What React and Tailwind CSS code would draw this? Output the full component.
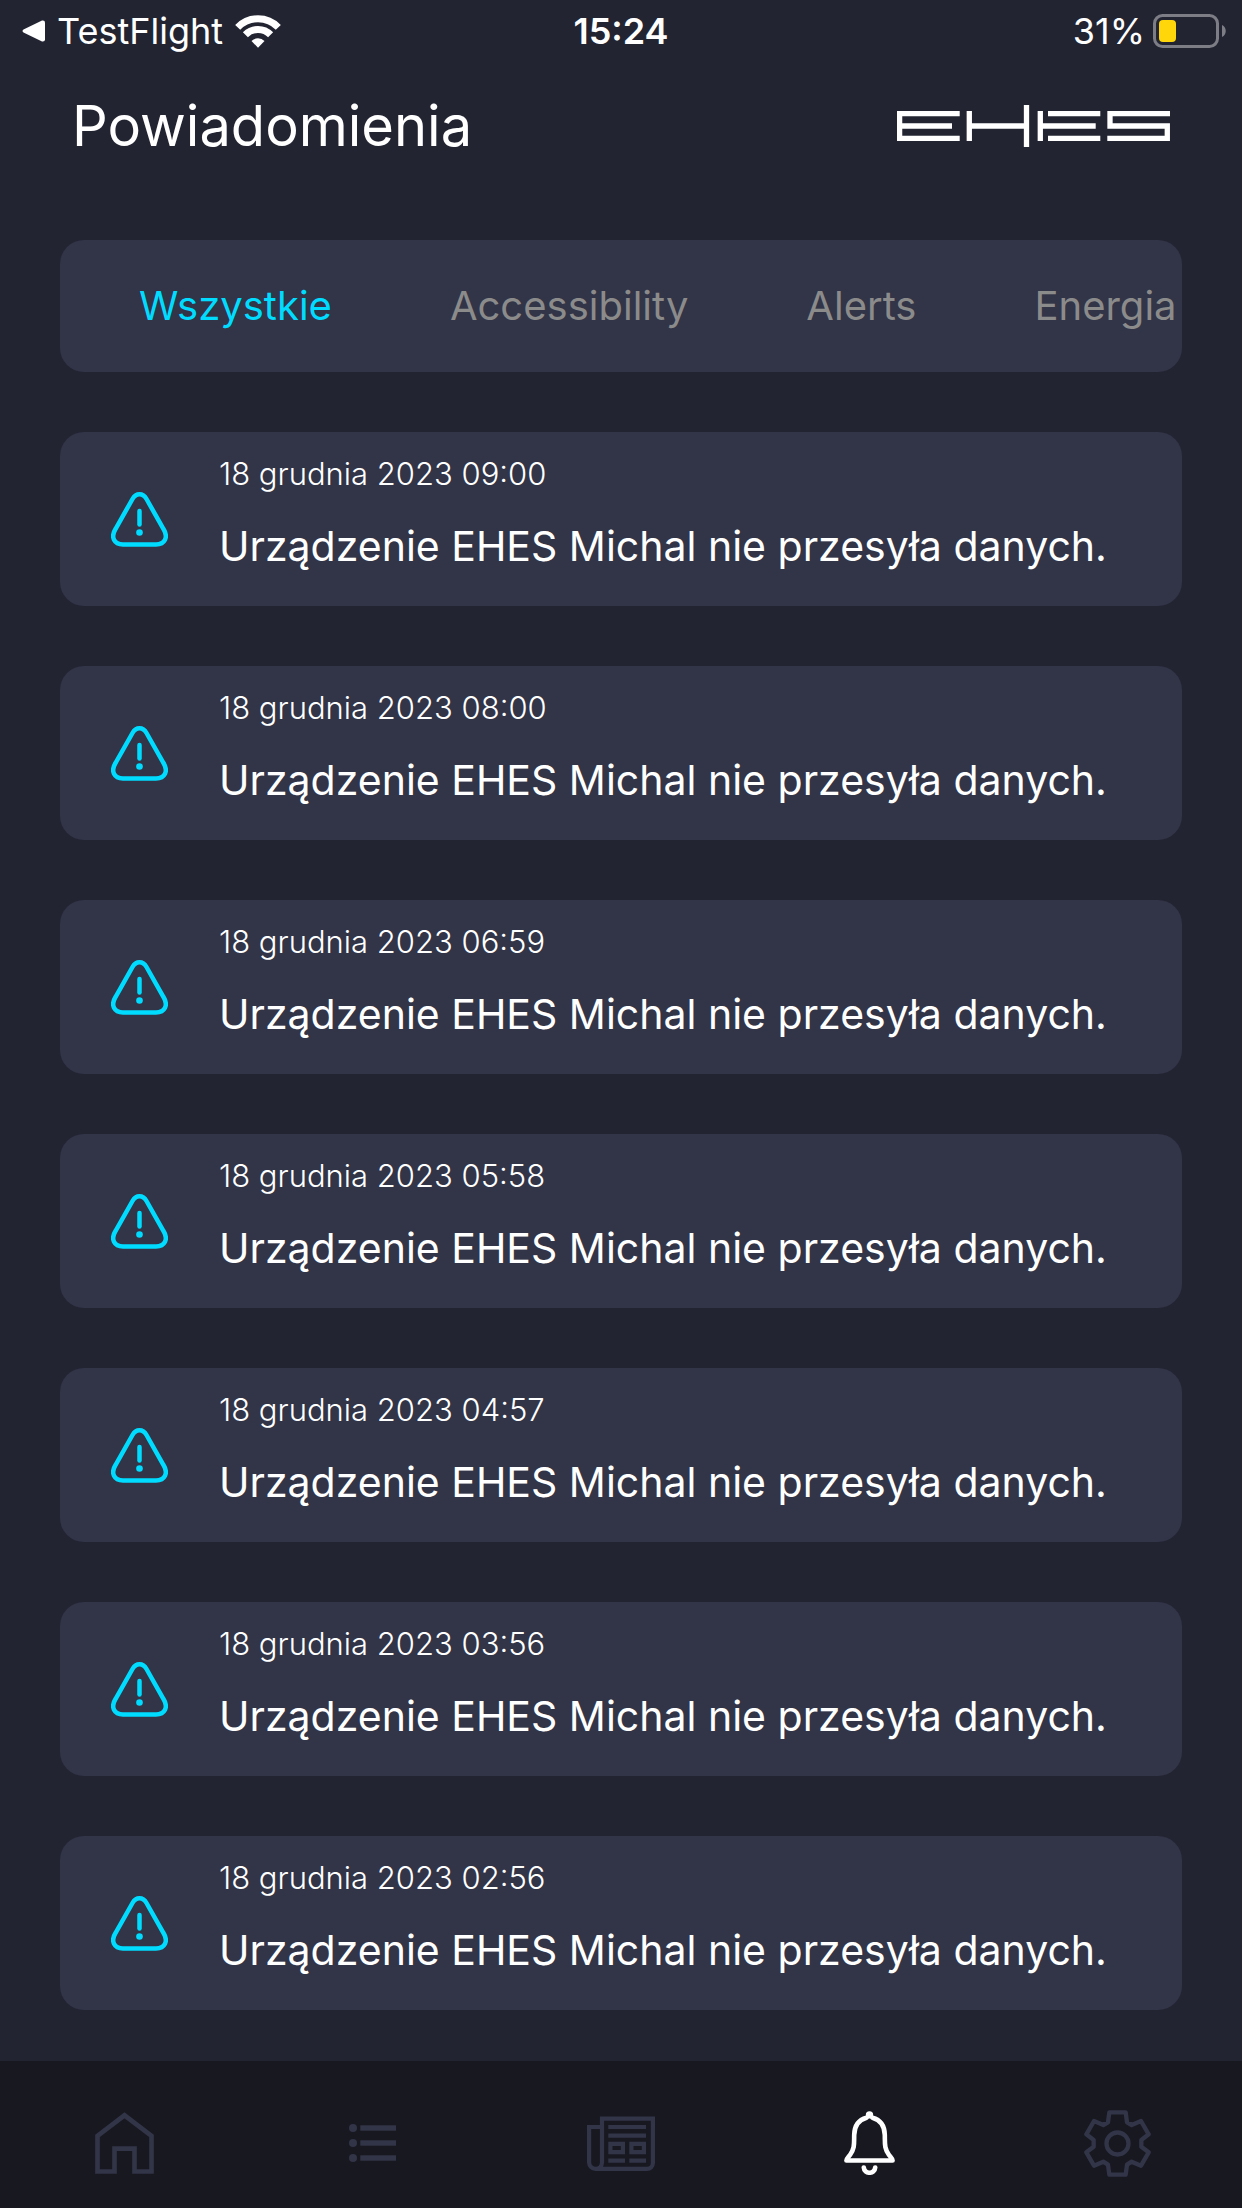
import { useState } from "react";
import clsx from "clsx";

const categories = ["Wszystkie", "Accessibility", "Alerts", "Energia"];

const notifications = [
  "18 grudnia 2023 09:00",
  "18 grudnia 2023 08:00",
  "18 grudnia 2023 06:59",
  "18 grudnia 2023 05:58",
  "18 grudnia 2023 04:57",
  "18 grudnia 2023 03:56",
  "18 grudnia 2023 02:56",
].map((date) => ({
  date,
  message: "Urządzenie EHES Michal nie przesyła danych.",
}));

function WifiIcon() {
  return (
    <svg width="46" height="33" viewBox="0 0 46 33" fill="none" aria-hidden="true">
      <g stroke="currentColor" strokeWidth="7">
        <path d="M2.7 12.4A28.2 28.2 0 0 1 43.3 12.4" />
        <path d="M10.4 19.8A17.5 17.5 0 0 1 35.6 19.8" />
      </g>
      <path d="M16.5 26A9 9 0 0 1 29.5 26L23 32.7Z" fill="currentColor" />
    </svg>
  );
}

function BatteryIcon() {
  return (
    <svg width="73" height="34" viewBox="0 0 73 34" fill="none" aria-hidden="true">
      <rect x="1.5" y="1.5" width="63" height="31" rx="8" stroke="#7d7d86" strokeWidth="3" />
      <rect x="6" y="6" width="17" height="22" rx="4" fill="#ffd60a" />
      <path d="M69 11C74 13 74 21 69 23Z" fill="#7d7d86" />
    </svg>
  );
}

function Logo() {
  return (
    <svg
      width="273"
      height="42"
      viewBox="0 0 273 42"
      fill="none"
      stroke="currentColor"
      strokeWidth="5.3"
      role="img"
      aria-label="EHES"
    >
      <path d="M62.7 8.7H2.6V33.3H62.7M2.6 21H55" />
      <path d="M72.3 6V36M72.3 21H129.5M129.5 0V42" />
      <path d="M143.3 6V36M151 8.7H203.3M143.3 21H198.7M151 33.3H203.3" />
      <path d="M273 8.7H213V21H270.3V33.3H210.3" />
    </svg>
  );
}

function WarningIcon() {
  return (
    <svg
      width="57"
      height="55"
      viewBox="0 0 57 55"
      fill="none"
      stroke="currentColor"
      strokeWidth="4.5"
      strokeLinecap="round"
      className="shrink-0"
      aria-hidden="true"
    >
      <path d="M21.5 7C25 .8 32 .8 35.5 7L52.5 37C57.5 45 54 52.4 45 52.4H12C3 52.4-.5 45 4.5 37Z" />
      <path d="M28.5 19V32.5" />
      <circle cx="28.5" cy="40.5" r="3.3" fill="currentColor" stroke="none" />
    </svg>
  );
}

function HomeIcon() {
  return (
    <svg width="59" height="62" viewBox="0 0 59 62" fill="none" stroke="currentColor" strokeWidth="4.7">
      <path d="M2.5 59.5V24L29.5 3.3L56.5 24V59.5H39.5V36.7H19.5V59.5Z" />
    </svg>
  );
}

function ListIcon() {
  return (
    <svg width="47" height="38" viewBox="0 0 47 38" fill="currentColor">
      {[4, 19, 34].map((y) => (
        <g key={y}>
          <circle cx="4" cy={y} r="4" />
          <rect x="11.3" y={y - 2.7} width="35.7" height="5.4" />
        </g>
      ))}
    </svg>
  );
}

function NewsIcon() {
  return (
    <svg width="68" height="55" viewBox="0 0 68 55" fill="none" stroke="currentColor" strokeWidth="4.2">
      <path d="M15 11H2.1V46.5A6.5 6.5 0 0 0 8.6 52.9H60A6 6 0 0 0 65.9 47V2.6H15V46.5A6.5 6.5 0 0 1 8.6 52.9" />
      <path d="M21.3 11H59M21.3 19.6H59M21.3 44.7H38M42.3 44.7H59" />
      <path d="M23.4 27.8H35.9V36.2H23.4ZM44.4 27.8H56.9V36.2H44.4Z" />
    </svg>
  );
}

function BellIcon() {
  return (
    <svg
      width="51"
      height="64"
      viewBox="0 0 51 64"
      fill="none"
      stroke="currentColor"
      strokeWidth="4.6"
      strokeLinecap="round"
      strokeLinejoin="round"
    >
      <path d="M22.5 6.8C14 9 10.4 16 10.2 24C10 33 10.8 37 6.3 43.5C5 45.5 2.4 47.5 2.4 49.5H48.6C48.6 47.5 46 45.5 44.7 43.5C40.2 37 41 33 40.8 24C40.6 16 37 9 28.5 6.8" />
      <circle cx="25.5" cy="3.9" r="2.2" fill="currentColor" strokeWidth="3" />
      <path d="M19.8 56.5C20.3 63.5 30.7 63.5 31.2 56.5" />
    </svg>
  );
}

function GearIcon() {
  return (
    <svg
      width="67"
      height="67"
      viewBox="135 180 201 201"
      fill="none"
      stroke="currentColor"
      strokeWidth="13"
      strokeLinejoin="round"
    >
      <path d="M211 187H260L264 217L278 225L306 213L329 253L307 270V290L329 307L306 347L278 335L264 344L260 374H211L207 344L193 335L165 347L142 307L164 290V270L142 253L165 213L193 225L207 217Z" />
      <circle cx="235.5" cy="280.5" r="33" />
    </svg>
  );
}

const navItems = [
  { label: "Dom", icon: HomeIcon },
  { label: "Lista", icon: ListIcon },
  { label: "Aktualności", icon: NewsIcon },
  { label: "Powiadomienia", icon: BellIcon },
  { label: "Ustawienia", icon: GearIcon },
];

function StatusBar() {
  return (
    <div className="grid grid-cols-[1fr_auto_1fr] items-center h-[62px] px-4 text-[36px] leading-[40px]">
      <a href="#testflight" className="flex items-center gap-3 pl-[6px]">
        <svg width="23" height="22" viewBox="0 0 23 22" fill="currentColor" aria-hidden="true">
          <path d="M1.5 9.5L20 .5Q23 0 23 2.5V19.5Q23 22 20 21.5L1.5 12.5Q-.5 11 1.5 9.5Z" />
        </svg>
        <span>TestFlight</span>
        <WifiIcon />
      </a>
      <span className="font-semibold">15:24</span>
      <div className="flex items-center justify-end gap-2">
        <span>31%</span>
        <BatteryIcon />
      </div>
    </div>
  );
}

function NotificationCard({ date, message }) {
  return (
    <li className="flex items-center gap-[51px] rounded-3xl bg-[#323447] pl-[51px] pr-6 pt-[22px] pb-[30px]">
      <span className="text-[#00dcff] pt-2">
        <WarningIcon />
      </span>
      <div className="flex flex-col gap-[22px] min-w-0">
        <time className="text-[31px] leading-[40px] font-light">{date}</time>
        <p className="text-[41px] leading-[60px]">{message}</p>
      </div>
    </li>
  );
}

export default function App() {
  const [category, setCategory] = useState("Wszystkie");
  const [active, setActive] = useState("Powiadomienia");

  return (
    <div className="min-h-screen flex flex-col bg-[#222432] text-white font-['Inter','Liberation_Sans',sans-serif]">
      <StatusBar />

      <header className="flex items-center justify-between h-32 px-[72px]">
        <h1 className="text-[56px] leading-[72px]">Powiadomienia</h1>
        <Logo />
      </header>

      <main className="flex-1 px-[60px] pt-[50px] pb-[51px]">
        <div className="flex items-center gap-[118px] h-[132px] pl-[79px] rounded-3xl bg-[#323447] overflow-hidden">
          {categories.map((name) => (
            <button
              key={name}
              onClick={() => setCategory(name)}
              className={clsx(
                "shrink-0 text-[40px] leading-[60px]",
                category === name ? "text-[#00dcff]" : "text-[#8b8b8b]"
              )}
            >
              {name}
            </button>
          ))}
        </div>

        <ul className="flex flex-col gap-[60px] mt-[60px]">
          {notifications.map((item) => (
            <NotificationCard key={item.date} {...item} />
          ))}
        </ul>
      </main>

      <nav className="flex bg-[#181820] pt-12 pb-[31px]">
        {navItems.map(({ label, icon: Icon }) => (
          <button
            key={label}
            aria-label={label}
            onClick={() => setActive(label)}
            className={clsx(
              "flex-1 flex items-center justify-center h-[68px]",
              active === label ? "text-white" : "text-[#323448]"
            )}
          >
            <Icon />
          </button>
        ))}
      </nav>
    </div>
  );
}
